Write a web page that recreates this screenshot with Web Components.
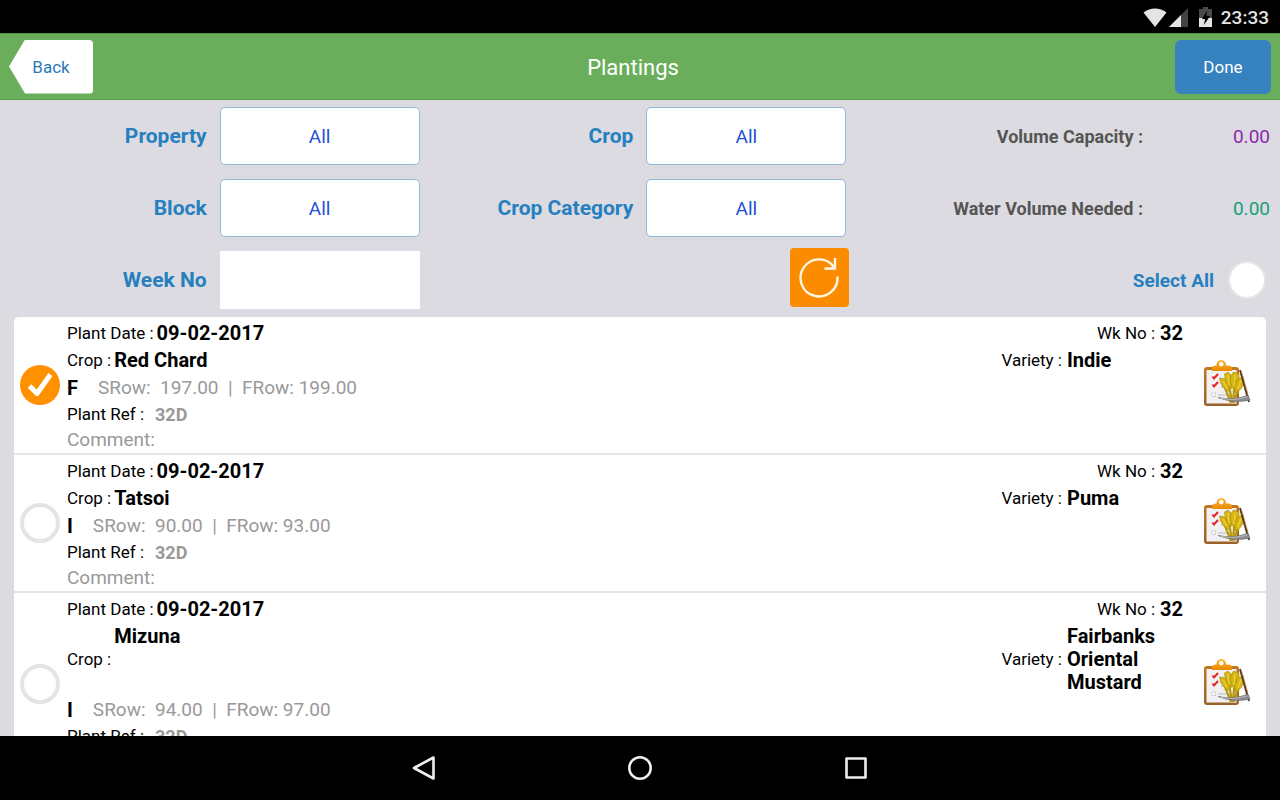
<!DOCTYPE html>
<html lang="en">
<head>
<meta charset="utf-8">
<title>Plantings</title>
<style>
  body { margin: 0; font-family: Roboto, "Liberation Sans", sans-serif; color: #000; }
</style>
</head>
<body>
<plantings-app></plantings-app>

<script>
const define = (name, html, setup) => {
  const template = document.createElement('template');
  template.innerHTML = html;
  customElements.define(name, class extends HTMLElement {
    connectedCallback() {
      if (this.shadowRoot) return;
      const root = this.attachShadow({ mode: 'open' });
      root.append(template.content.cloneNode(true));
      if (setup) setup(this, root);
    }
  });
};

/* Android status bar */
define('status-bar', `
  <style>
    :host { display: flex; align-items: center; justify-content: flex-end; height: 33px; padding: 1px 11px 0;
      box-sizing: border-box; background: #000; color: #e4e4e4; font-size: 19px; font-weight: 500; }
    svg { display: block; }
    .wifi { margin-right: 2px; }
    .cell { margin-right: 11px; }
    .battery { margin-right: 9px; }
  </style>
  <svg class="wifi" width="24" height="19" viewBox="0 0 24 19" aria-label="Wi-Fi"><path d="M12 19 0.500 4.500C7 -1 17 -1 23.500 4.500Z" fill="#e4e4e4"/></svg>
  <svg class="cell" width="19" height="19" viewBox="0 0 19 19" aria-label="Signal"><path d="M0 19 19 0V19Z" fill="#444"/><path d="M0 19 12 7V19Z" fill="#e4e4e4"/></svg>
  <svg class="battery" width="13" height="20" viewBox="0 0 13 20" aria-label="Battery charging"><path d="M4 0H9V2H13V20H0V2H4Z" fill="#4a4a4a"/><path d="M0 11H13V20H0Z" fill="#e4e4e4"/><path d="M8 4 3 12H6L5 18 11 9H7.500Z" fill="#000"/></svg>
  <time>23:33</time>
`);

/* Title bar: back button, title, action */
define('title-bar', `
  <style>
    :host { display: grid; grid-template-columns: 1fr auto 1fr; align-items: center; height: 67px; padding: 0 9px;
      box-sizing: border-box; background: #6aae5c; border-top: 1px solid #4d9a3e; border-bottom: 1px solid #56a246; }
    h1 { margin: 0; padding: 2px 14px 0 0; color: #fff; font-size: 22px; font-weight: 400; }
    button { height: 54px; border: 0; padding: 0; font: 400 17px Roboto, sans-serif; cursor: pointer; }
    .back { width: 84px; background: #fff; color: #2a7ab9; border-radius: 4px;
      clip-path: polygon(0 50%, 16px 0, 100% 0, 100% 100%, 16px 100%); }
    .done { width: 96px; background: #3682bf; color: #fff; border-radius: 6px; justify-self: end; }
  </style>
  <button class="back" type="button">Back</button>
  <h1><slot></slot></h1>
  <button class="done" type="button">Done</button>
`);

/* Labelled drop-down; the "text" attribute turns it into a plain text box */
define('filter-field', `
  <style>
    :host { display: flex; align-items: center; justify-content: flex-end; gap: 13px; padding-right: 7px; height: 72px; }
    label { color: #2680bf; font-size: 21px; font-weight: 700; }
    select, input { box-sizing: border-box; width: 200px; height: 58px; margin: 0; padding: 0 8px; appearance: none;
      border: 1px solid #8db9dc; border-radius: 5px; background: #fff; color: #1f4fd6;
      font: 400 19px Roboto, sans-serif; text-align: center; text-align-last: center; }
    input { border-color: #fff; border-radius: 0; }
  </style>
`, (host, root) => {
  const label = document.createElement('label');
  label.htmlFor = 'control';
  label.textContent = host.getAttribute('label');
  const control = document.createElement(host.hasAttribute('text') ? 'input' : 'select');
  control.id = 'control';
  if (control.localName === 'select') control.append(new Option('All'));
  root.append(label, control);
});

define('volume-readout', `
  <style>
    :host { display: flex; align-items: center; justify-content: flex-end; height: 72px; padding-right: 10px; font-size: 18px; }
    .name { color: #555; font-weight: 700; }
    output { width: 127px; text-align: right; font-size: 19px; color: var(--value-color); }
  </style>
  <span class="name"><slot name="name"></slot></span><output><slot></slot></output>
`);

define('refresh-button', `
  <style>
    :host { display: flex; justify-content: flex-end; padding: 4px 4px 0 0; }
    button { width: 59px; height: 59px; padding: 0; border: 0; border-radius: 4px; background: #fb8c00; cursor: pointer; }
    svg { display: block; }
  </style>
  <button type="button" aria-label="Refresh">
    <svg width="59" height="59" viewBox="0 0 59 59" fill="none" stroke="#fff6e6" stroke-width="2.400"><path d="M47.500 28.500A18.500 18.500 0 1 1 44 19"/><path d="M45 10V20.500H34.500"/></svg>
  </button>
`);

define('select-all', `
  <style>
    :host { display: flex; align-items: center; justify-content: flex-end; height: 72px; padding-right: 14px; }
    label { display: flex; align-items: center; gap: 14px; color: #2680bf; font-size: 19px; font-weight: 700; }
    input { appearance: none; width: 38px; height: 38px; margin: 0; box-sizing: border-box; border: 2px solid #e5e5e7; border-radius: 50%; background: #fff; }
    input:checked { background: #fb8c00; }
  </style>
  <label>Select All <input type="checkbox"></label>
`);

define('filter-panel', `
  <style>
    :host { display: grid; grid-template-columns: repeat(3, 1fr); }
    .purple { --value-color: #8a2bab; }
    .green { --value-color: #17a07a; }
  </style>
  <filter-field label="Property"></filter-field>
  <filter-field label="Crop"></filter-field>
  <volume-readout class="purple"><span slot="name">Volume Capacity :</span>0.00</volume-readout>
  <filter-field label="Block"></filter-field>
  <filter-field label="Crop Category"></filter-field>
  <volume-readout class="green"><span slot="name">Water Volume Needed :</span>0.00</volume-readout>
  <filter-field label="Week No" text></filter-field>
  <refresh-button></refresh-button>
  <select-all></select-all>
`);

/* Clipboard with wheat and scythe */
define('harvest-icon', `
  <style>:host { display: block; } svg { display: block; }</style>
  <svg width="48" height="48" viewBox="0 0 48 48" aria-hidden="true">
    <defs>
      <linearGradient id="board" x1="0" y1="0" x2="0" y2="1"><stop offset="0" stop-color="#c5761a"/><stop offset="1" stop-color="#996129"/></linearGradient>
      <linearGradient id="clip" x1="0" y1="0" x2="0" y2="1"><stop offset="0" stop-color="#ffb429"/><stop offset="1" stop-color="#e88a05"/></linearGradient>
    </defs>
    <rect x="1" y="8" width="35" height="39" rx="3" fill="url(#board)"/>
    <path d="M3.500 11H33.500V44.500H3.500Z" fill="#f1f1f3"/><path d="M26 44.500H33.500V37Z" fill="#d3d3d8"/>
    <path d="M9 12V9.500Q9 6.500 13 6.500H13.500A4.800 4.800 0 1 1 23 6.500H25Q29 6.500 29 9.500V12ZM18.300 2.800A2.300 2.300 0 1 0 18.310 2.800Z" fill="url(#clip)" fill-rule="evenodd"/>
    <path d="M18 20H26M18 28H26M15 36H31" stroke="#b9b9bd"/>
    <path d="M9.500 17.500 11 19.500 15 15M9.500 25.500 11 27.500 15 23" fill="none" stroke="#e9202b" stroke-width="2"/>
    <rect x="9" y="34" width="3.500" height="3.500" fill="#fff" stroke="#c9c9cd" stroke-width=".8"/>
    <path d="M20 24 28 44M25 19 29 44M32 18 30 44M38 24 30 44" stroke="#b99a0c" stroke-width="2.200" fill="none"/>
    <g fill="#d6b514" stroke="#a58609" stroke-width=".6">
      <path d="M16.500 19Q24 19 26 26L27 33Q18 30 16.500 19Z"/>
      <path d="M21.500 15 25 13 29 17Q31 24 28 30Q22 24 21.500 15Z"/>
      <path d="M30.500 13 36 15Q37 25 31 31Q26 24 28 17Z"/>
      <path d="M40 17.500 41 22Q40 31 32 34Q31 26 34 21Z"/>
    </g>
    <path d="M20 22 24 29M25 16 26 26M32 16 31 27M38 21 35 30" stroke="#eed33c" stroke-width="1.200"/>
    <path d="M37 11 46 43" stroke="#5c3a1b" stroke-width="2"/>
    <path d="M38.500 13 45 35" stroke="#b98445" stroke-width=".6"/>
    <path d="M15 38.500Q29 41 39 38L45 36 47 41Q31 45 15 38.500Z" fill="#8b8d90" stroke="#5e6063" stroke-width=".5"/>
    <path d="M18 39.300Q31 42 44 38" stroke="#c4c6c8" stroke-width=".8" fill="none"/>
  </svg>
`);

/* One planting record; values arrive through slots */
define('planting-row', `
  <style>
    :host { display: flex; align-items: center; padding: 0 15px 0 6px; border-bottom: 2px solid #e3e3e9; background: #fff; }
    input { flex: none; appearance: none; width: 40px; height: 40px; margin: 0 7px 0 0; box-sizing: border-box;
      border: 4px solid #e4e4e4; border-radius: 50%; background: #fff; }
    input:checked { border: 0; background: #ff9100 url("data:image/svg+xml,%3Csvg xmlns='http://www.w3.org/2000/svg' viewBox='0 0 40 40'%3E%3Cpath d='M9.500 21 17 28.500 30.500 9.500' fill='none' stroke='white' stroke-width='5' stroke-linejoin='round'/%3E%3C/svg%3E"); }
    .body { flex: 1; padding-top: 2px; }
    .line { display: flex; align-items: center; height: 26px; font-size: 17px; white-space: pre; }
    .first { height: 28px; }
    .rows { height: 27px; gap: 20px; color: #999; font-size: 19px; }
    .crop { height: auto; align-items: stretch; padding: 2px 0; line-height: 23px; }
    .crop .key { align-self: center; }
    b { font-size: 20px; font-weight: 700; color: #000; }
    .grow { flex: 1; }
    .key { margin-right: 3px; }
    .right { margin-right: 5px; }
    .variety { width: 116px; white-space: normal; }
    .ref { color: #999; font-size: 18px; margin-left: 8px; }
    .line.comment { height: 24px; padding-bottom: 2px; color: #999; font-size: 19px; }
    harvest-icon { margin: 0 0 4px 20px; }
  </style>
  <input type="checkbox" aria-label="Select planting">
  <div class="body">
    <div class="line first"><span class="key">Plant Date :</span><b class="grow"><slot name="date"></slot></b><span class="right">Wk No :</span><b><slot name="week"></slot></b></div>
    <div class="line crop"><span class="key">Crop :</span><b class="grow"><slot name="crop"></slot></b><span class="key right">Variety :</span><b class="variety"><slot name="variety"></slot></b></div>
    <div class="line rows"><b><slot name="type"></slot></b><slot name="rows"></slot></div>
    <div class="line"><span class="key">Plant Ref :</span><b class="ref"><slot name="ref"></slot></b></div>
    <div class="line comment">Comment:</div>
  </div>
  <harvest-icon></harvest-icon>
`, (host, root) => { root.querySelector('input').checked = host.hasAttribute('checked'); });

define('planting-list', `
  <style>
    :host { display: block; flex: 1; min-height: 0; margin: 1px 14px 0; overflow-y: auto; scrollbar-width: none; border-radius: 5px 5px 0 0; background: #fff; }
  </style>
  <slot></slot>
`);

/* Android navigation bar */
define('nav-bar', `
  <style>
    :host { display: flex; justify-content: center; align-items: center; gap: 168px; height: 64px; background: #000; }
    button { width: 48px; height: 48px; padding: 0; border: 0; background: none; }
    svg { display: block; margin: auto; fill: none; stroke: #eee; stroke-width: 2.600; stroke-linejoin: round; }
  </style>
  <button type="button" aria-label="Back"><svg width="48" height="48" viewBox="0 0 48 48"><path d="M33.500 13.500V34.500L14 24Z"/></svg></button>
  <button type="button" aria-label="Home"><svg width="48" height="48" viewBox="0 0 48 48"><circle cx="24" cy="24" r="10.700"/></svg></button>
  <button type="button" aria-label="Recent apps"><svg width="48" height="48" viewBox="0 0 48 48"><rect x="14.500" y="14.500" width="19" height="19"/></svg></button>
`);

define('plantings-app', `
  <style>
    :host { display: flex; flex-direction: column; height: 100vh; background: #dcdbe1; }
    status-bar, title-bar, filter-panel, nav-bar { flex: none; }
  </style>
  <status-bar></status-bar>
  <title-bar>Plantings</title-bar>
  <filter-panel></filter-panel>
  <planting-list>
    <planting-row checked>
      <span slot="date">09-02-2017</span><span slot="week">32</span><span slot="crop">Red Chard</span><span slot="variety">Indie</span>
      <span slot="type">F</span><span slot="rows">SRow:  197.00  |  FRow: 199.00</span><span slot="ref">32D</span>
    </planting-row>
    <planting-row>
      <span slot="date">09-02-2017</span><span slot="week">32</span><span slot="crop">Tatsoi</span><span slot="variety">Puma</span>
      <span slot="type">I</span><span slot="rows">SRow:  90.00  |  FRow: 93.00</span><span slot="ref">32D</span>
    </planting-row>
    <planting-row>
      <span slot="date">09-02-2017</span><span slot="week">32</span><span slot="crop">Mizuna</span><span slot="variety">Fairbanks Oriental Mustard</span>
      <span slot="type">I</span><span slot="rows">SRow:  94.00  |  FRow: 97.00</span><span slot="ref">32D</span>
    </planting-row>
  </planting-list>
  <nav-bar></nav-bar>
`);
</script>
</body>
</html>
